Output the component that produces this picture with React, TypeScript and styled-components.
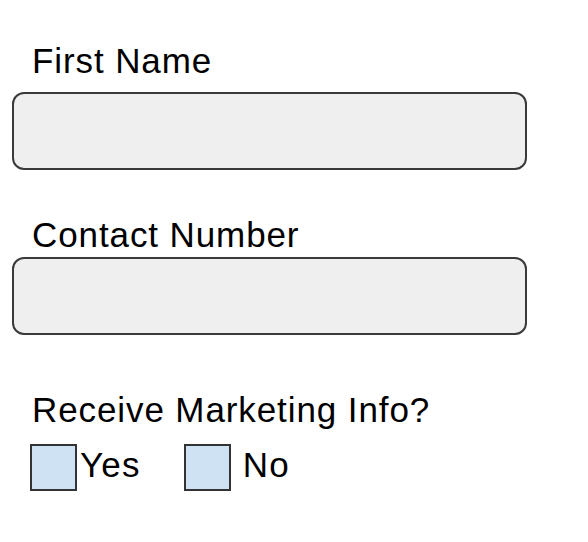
import React, { FC } from 'react'
import styled, { createGlobalStyle } from 'styled-components'

const GlobalStyle = createGlobalStyle`
  html, body {
    margin: 0;
    padding: 0;
    background: #FFFFFF;
  }
  body {
    font-family: 'Liberation Sans', Arial, sans-serif;
    color: #000000;
  }
`

const Form = styled.form`
  width: 588px;
  height: 542px;
  box-sizing: border-box;
  padding: 41px 0 0 12px;
  display: flex;
  flex-direction: column;
`

const Label = styled.label<{ $top?: number; $bottom?: number }>`
  display: block;
  margin: ${p => p.$top ?? 0}px 0 ${p => p.$bottom ?? 0}px 20px;
  font-size: 35px;
  line-height: 39px;
  letter-spacing: 0.9px;
  color: #000000;
`

const TextBox = styled.input`
  display: block;
  width: 515px;
  height: 78px;
  box-sizing: border-box;
  margin: 0;
  border: 2px solid #3a3a3a;
  border-radius: 12px;
  background: #EFEFEF;
  outline: none;
  font-family: inherit;
  font-size: 28px;
  padding: 0 16px;
`

const OptionsRow = styled.div`
  display: flex;
  align-items: center;
  margin: 15px 0 0 18px;
`

const Option = styled.label<{ $gap: number }>`
  display: flex;
  align-items: center;
  gap: ${p => p.$gap}px;
  margin-right: 43px;
  font-size: 35px;
  line-height: 39px;
  letter-spacing: 1.2px;
  color: #000000;
`

const OptionText = styled.span`
  position: relative;
  top: -3px;
`

const Box = styled.span`
  display: block;
  width: 47px;
  height: 47px;
  box-sizing: border-box;
  border: 2px solid #333333;
  background: #CFE2F3;
`

interface OptionProps {
  text: string
  gap: number
}

const CheckOption: FC<OptionProps> = ({ text, gap }) => (
  <Option $gap={gap}>
    <Box />
    <OptionText>{text}</OptionText>
  </Option>
)

const App: FC = () => {
  return (
    <>
      <GlobalStyle />
      <Form onSubmit={e => e.preventDefault()}>
        <Label htmlFor="first-name" $bottom={12}>First Name</Label>
        <TextBox id="first-name" type="text" />

        <Label htmlFor="contact-number" $top={45} $bottom={3}>Contact Number</Label>
        <TextBox id="contact-number" type="text" />

        <Label $top={55}>Receive Marketing Info?</Label>
        <OptionsRow>
          <CheckOption text="Yes" gap={3} />
          <CheckOption text="No" gap={12} />
        </OptionsRow>
      </Form>
    </>
  )
}

export default App
